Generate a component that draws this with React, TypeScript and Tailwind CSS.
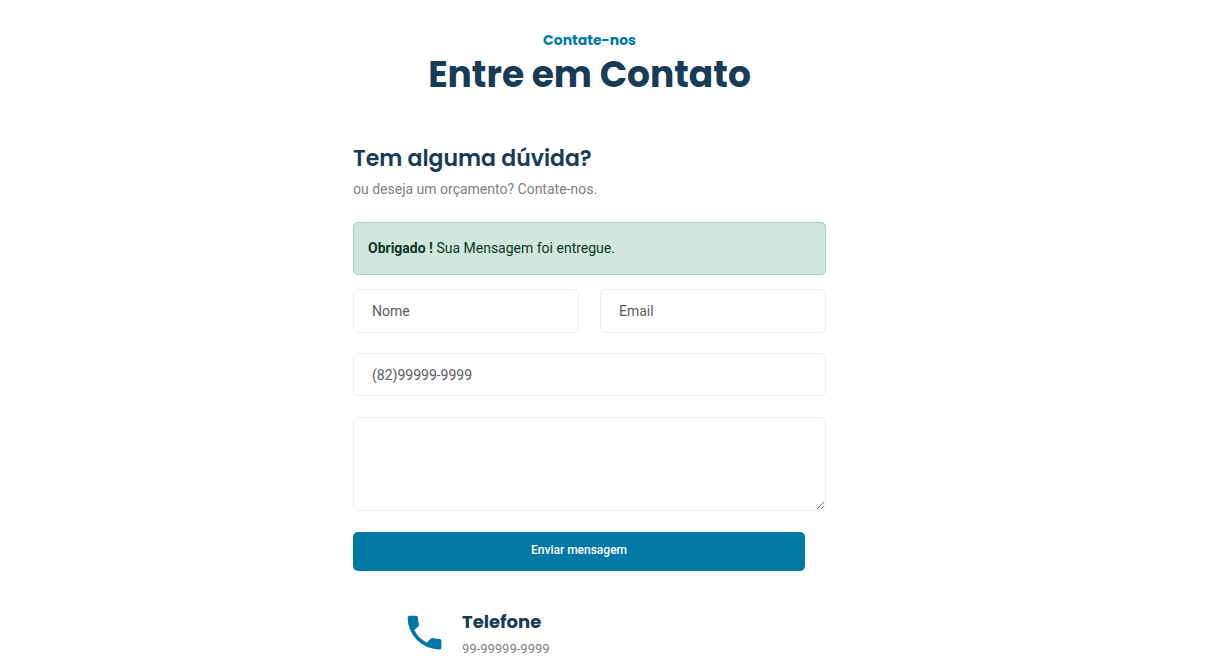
const heading = "font-[Poppins,Inter,sans-serif] text-[#183b56]";
const field =
  "block w-full rounded-[5px] border border-[#eeeeee] bg-white px-[18px] text-sm text-[#212529] placeholder:text-[#595c5f] placeholder:opacity-100 outline-none focus:border-[#0078a6]";

function PhoneIcon({ className }: { className: string }) {
  return (
    <svg viewBox="0 0 24 24" fill="currentColor" className={className} aria-hidden="true">
      <path d="M6.62 10.79c1.44 2.83 3.76 5.15 6.59 6.59l2.2-2.2c.28-.28.67-.36 1.02-.25 1.12.37 2.32.57 3.57.57a1 1 0 0 1 1 1V20a1 1 0 0 1-1 1A17 17 0 0 1 3 4a1 1 0 0 1 1-1h3.5a1 1 0 0 1 1 1c0 1.25.2 2.45.57 3.57.11.35.03.74-.25 1.02l-2.2 2.2z" />
    </svg>
  );
}

export default function App() {
  return (
    <main className="min-h-screen bg-white pr-[35px] font-[Roboto,sans-serif] text-sm text-[#808080]">
      <section className="mx-auto flex w-full max-w-[473px] flex-col pt-[30px] pb-[14px]">
        <header className="text-center">
          <h6 className="font-[Poppins,Inter,sans-serif] text-sm leading-5 font-bold text-[#0078a6]">
            Contate-nos
          </h6>
          <h2 className={`${heading} mt-[2px] text-4xl leading-[46px] font-bold whitespace-nowrap`}>
            Entre em Contato
          </h2>
        </header>

        <h4 className={`${heading} mt-[47px] text-[22px] leading-7 font-semibold`}>
          Tem alguma dúvida?
        </h4>
        <p className="mt-[5px] leading-[22px]">ou deseja um orçamento? Contate-nos.</p>

        <div
          role="status"
          className="mt-[22px] rounded-[5px] border border-[#a3cfbb] bg-[#d1e7dd] px-[14px] py-[14px] leading-[23px] text-[#0a3622]"
        >
          <strong className="font-bold">Obrigado !</strong> Sua Mensagem foi entregue.
        </div>

        <form className="mt-[14px] flex flex-col" onSubmit={(e) => e.preventDefault()}>
          <div className="grid grid-cols-2 gap-[21px]">
            <input type="text" name="nome" aria-label="Nome" placeholder="Nome" className={`${field} h-11`} />
            <input type="email" name="email" aria-label="Email" placeholder="Email" className={`${field} h-11`} />
          </div>
          <input
            type="tel"
            name="telefone"
            aria-label="Telefone"
            placeholder="(82)99999-9999"
            className={`${field} mt-5 h-[43px]`}
          />
          <textarea name="mensagem" aria-label="Mensagem" className={`${field} mt-[21px] h-[94px] resize py-3`} />
          <button
            type="submit"
            className="mt-[21px] mr-[21px] h-[39px] rounded-[5px] bg-[#0078a6] pb-[3px] text-xs font-medium text-white"
          >
            Enviar mensagem
          </button>
        </form>

        <div className="mt-[39px] flex items-start gap-[15px] pl-[49px]">
          <PhoneIcon className="size-[45px] shrink-0 text-[#0078a6]" />
          <div>
            <h5 className={`${heading} text-lg leading-6 font-bold`}>Telefone</h5>
            <p className="mt-[5px] text-[13px] leading-5">99-99999-9999</p>
          </div>
        </div>
      </section>
    </main>
  );
}
